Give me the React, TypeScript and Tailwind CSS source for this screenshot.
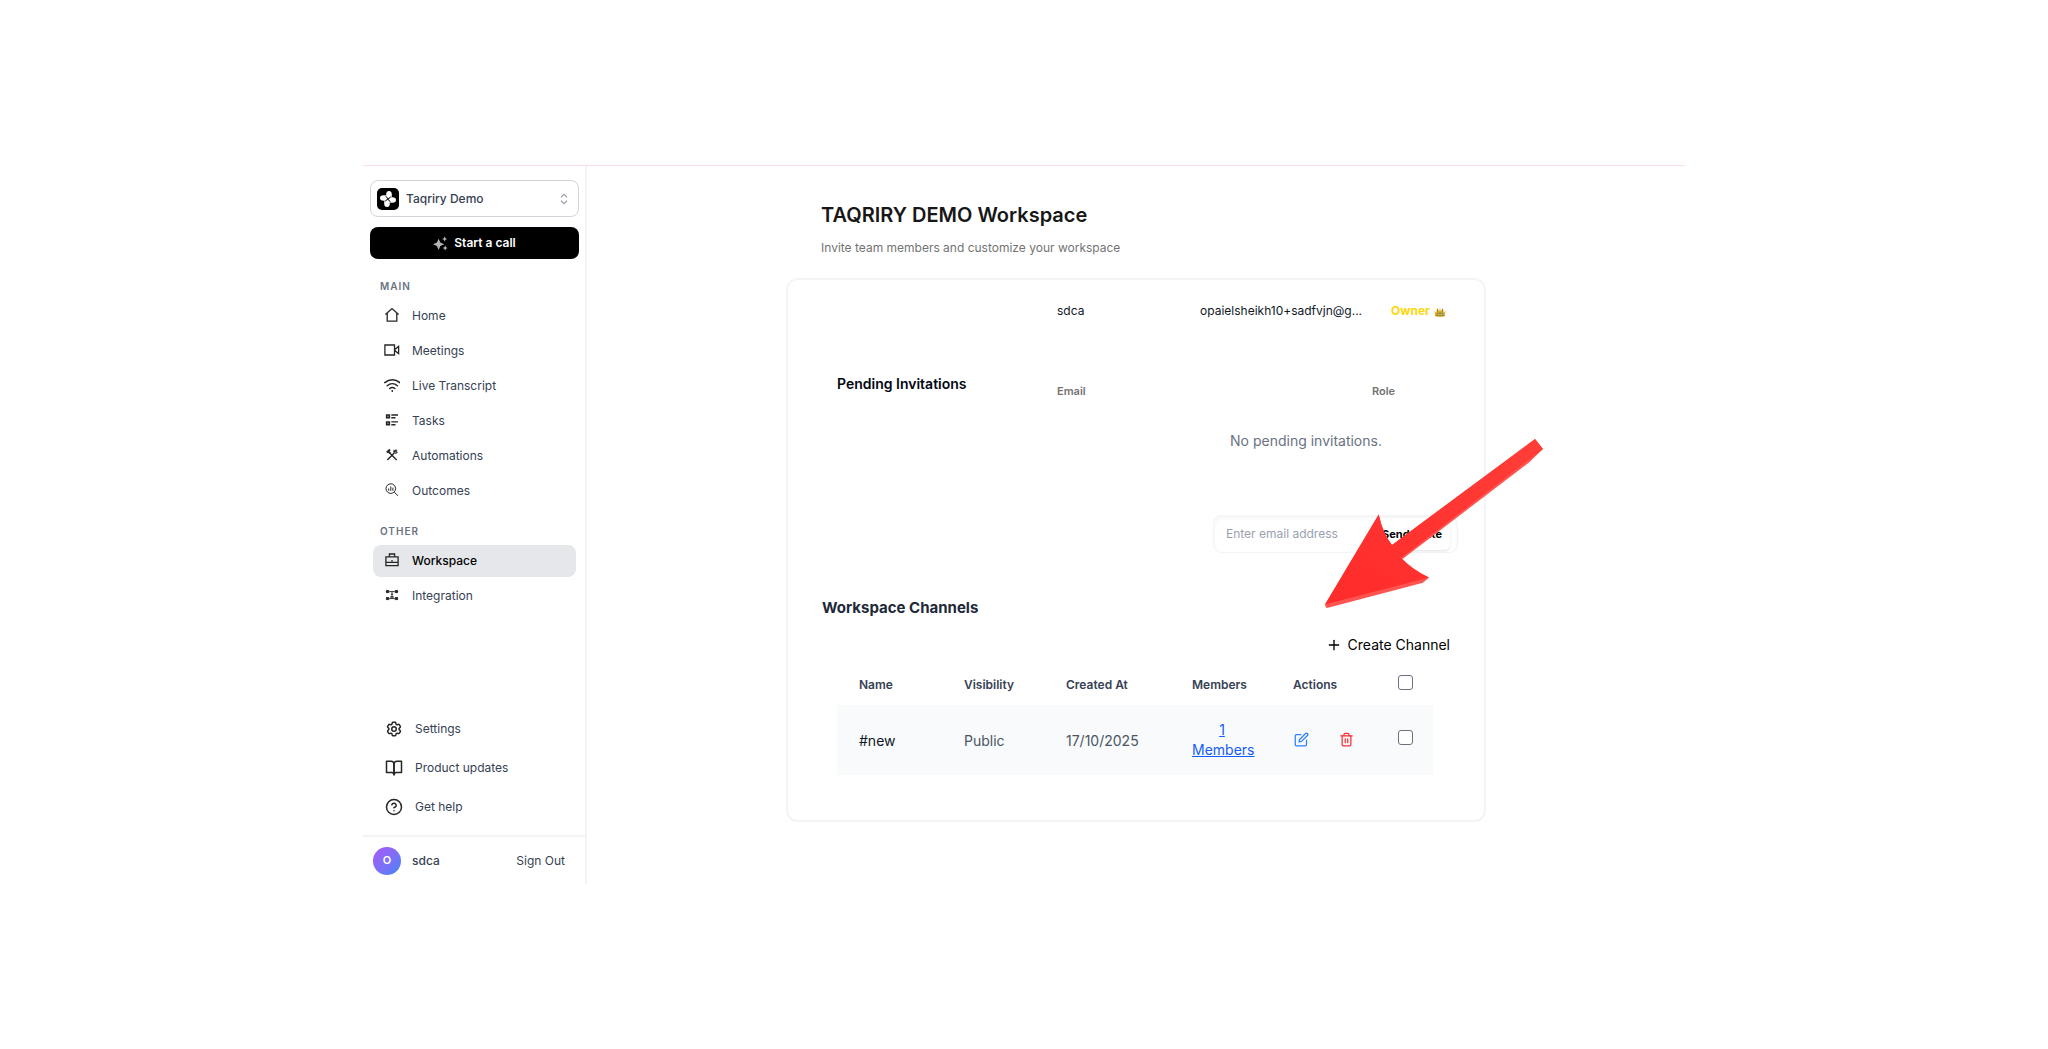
import { useState } from "react";
import type { ReactNode } from "react";
import { FiBookOpen, FiEdit, FiHelpCircle, FiPlus, FiTrash2 } from "react-icons/fi";
import { HiOutlineCog6Tooth } from "react-icons/hi2";

const Icon = ({ children, className = "h-4 w-4" }: { children: ReactNode; className?: string }) => (
    <svg viewBox="0 0 16 16" fill="none" stroke="currentColor" strokeWidth="1.3" className={className} aria-hidden="true">
        {children}
    </svg>
);

const HomeIcon = () => (
    <Icon>
        <path d="M1.4 7.6 8 1.6l6.6 6M3.2 6.2v8h9.6v-8" />
    </Icon>
);

const MeetingsIcon = () => (
    <Icon>
        <path d="M.9 3h9.6v10H.9zM11 7.2l3.6-2.8v7.2L11 8.8z" />
    </Icon>
);

const LiveIcon = () => (
    <Icon>
        <path d="M.8 5.6c4.4-3.8 10.8-3.8 15 0M3.2 8.7c3-2.6 7.2-2.6 10.2 0M5.7 11.5c1.6-1.3 3.6-1.3 5.2 0" strokeWidth="1.5" strokeLinecap="round" />
        <circle cx="8.3" cy="14" r="0.9" fill="currentColor" stroke="none" />
    </Icon>
);

const TasksIcon = () => (
    <Icon>
        <path d="M2.7 3h2.6v2.6H2.7zM2.7 10h2.6v2.6H2.7z" strokeWidth="1.7" />
        <path d="M7.3 3H14M7.3 5.8h4.2M7.3 9.9H14M7.3 12.7h4.2" strokeWidth="1.4" />
    </Icon>
);

const AutomationsIcon = () => (
    <Icon>
        <path d="M5.5 5.8 12.6 13M10.2 5.9 3.4 13" strokeWidth="1.4" />
        <path d="M2.8 5.4 6 2.6M3.6 3.7l2.5 2.5" strokeWidth="2" />
        <path d="M10.2 2.8c-.6 1.3-.3 2.3.5 2.9.9.6 1.9.5 2.7-.5M12.3 2.5l-1.2 1.8 2.1-.4" strokeWidth="1.2" />
    </Icon>
);

const OutcomesIcon = () => (
    <Icon>
        <circle cx="6.8" cy="6.6" r="4.8" strokeWidth="1" />
        <path d="M10.3 10.2 14 13.8M4.7 6.5v2.3M6.8 4.5v4.3M8.9 5.7v3.1" strokeWidth="1" />
    </Icon>
);

const WorkspaceIcon = () => (
    <Icon>
        <path d="M1.9 4.9h12.2v8.8H1.9zM5.4 4.7V2h5.2v2.7M2 10.3h12M8 8v1.6" />
    </Icon>
);

const IntegrationIcon = () => (
    <Icon>
        <path d="M2.4 3.6h2.4v2H2.4zM11.2 3.6h2.4v2h-2.4zM2.4 10.6h2.4v2H2.4zM11.2 10.6h2.4v2h-2.4z" fill="currentColor" strokeWidth="1" />
        <path d="M5.3 4.6h5.4M5.3 11.6h1.4M9.3 11.6h1.4M8 4.6v2.6M6.8 7.2h2.4M8 7.2v4.4M6.8 9.6h2.4v2H6.8z" strokeWidth="0.9" />
    </Icon>
);

const mainItems = [
    { label: "Home", icon: <HomeIcon /> },
    { label: "Meetings", icon: <MeetingsIcon /> },
    { label: "Live Transcript", icon: <LiveIcon /> },
    { label: "Tasks", icon: <TasksIcon /> },
    { label: "Automations", icon: <AutomationsIcon /> },
    { label: "Outcomes", icon: <OutcomesIcon /> },
];

const otherItems = [
    { label: "Workspace", icon: <WorkspaceIcon />, active: true },
    { label: "Integration", icon: <IntegrationIcon /> },
];

const footerItems = [
    { label: "Settings", icon: <HiOutlineCog6Tooth strokeWidth={2} className="h-[18px] w-[18px]" /> },
    { label: "Product updates", icon: <FiBookOpen className="h-[18px] w-[18px]" /> },
    { label: "Get help", icon: <FiHelpCircle className="h-[18px] w-[18px]" /> },
];

const channels = [{ name: "#new", visibility: "Public", createdAt: "17/10/2025", members: 1 }];

type Item = { label: string; icon: ReactNode; active?: boolean };

function NavGroup({ title, items }: { title: string; items: Item[] }) {
    return (
        <div className="mb-[14px]">
            <h2 className="px-[10px] pb-1 text-[10px] leading-5 font-semibold tracking-widest text-gray-500">{title}</h2>
            <ul className="flex flex-col gap-[3px] px-[3px]">
                {items.map((item) => (
                    <li key={item.label}>
                        <a
                            href="#"
                            className={`flex h-8 items-center gap-3 rounded-lg px-[11px] text-[12px] ${item.active ? "bg-gray-200 font-medium text-black" : "text-gray-700"}`}
                        >
                            <span className="pb-[2px] text-neutral-800">{item.icon}</span>
                            {item.label}
                        </a>
                    </li>
                ))}
            </ul>
        </div>
    );
}

function Sidebar() {
    return (
        <aside className="flex w-56 shrink-0 flex-col border-r-2 border-gray-100">
            <div className="flex flex-col gap-[10px] pt-[14px] pr-[6px] pb-[17px] pl-[7px]">
                <button className="flex h-[37px] items-center rounded-lg border border-gray-300 px-[6px] text-[12px] font-medium text-gray-700">
                    <svg viewBox="0 0 22 22" className="mr-[7px] h-[22px] w-[22px]" aria-hidden="true">
                        <rect width="22" height="22" rx="5" fill="#000" />
                        <g fill="#fff">
                            <ellipse cx="12" cy="6.5" rx="2.8" ry="3.5" />
                            <ellipse cx="10" cy="15.5" rx="2.8" ry="3.5" />
                            <ellipse cx="6.5" cy="10" rx="3.5" ry="2.8" />
                            <ellipse cx="15.5" cy="12" rx="3.5" ry="2.8" />
                            <rect x="7.5" y="7.5" width="7" height="7" />
                        </g>
                        <path d="M9 8.3c.2 1.2.8 1.7 2 1.8M13.8 9c-1.2.2-1.7.8-1.8 2M13 13.8c-.2-1.2-.8-1.700-2-1.800M8.200 13c1.200-.2 1.700-.8 1.800-2" stroke="#000" strokeWidth="1" fill="none" />
                        <circle cx="11" cy="11" r="0.9" fill="#000" />
                    </svg>
                    Taqriry Demo
                    <svg viewBox="0 0 10 12" className="mr-[3px] ml-auto h-3 w-[10px]" fill="none" stroke="#9ca3af" strokeWidth="1.2" aria-hidden="true">
                        <path d="M2 4.2 5 1.4l3 2.8M2 7.8l3 2.8 3-2.8" />
                    </svg>
                </button>
                <button className="flex h-8 items-center justify-center gap-[6px] rounded-lg bg-black text-[12px] font-semibold text-white">
                    <svg viewBox="0 0 16 16" className="h-[15px] w-[15px]" fill="#b5b5b5" aria-hidden="true">
                        <path d="M6 2.8 7.8 7 12 8.8 7.8 10.6 6 14.8 4.2 10.6 0 8.8 4.2 7zM12.4.6l.9 1.7 1.7.9-1.7.9-.9 1.7-.9-1.7-1.7-.9 1.7-.9zM13 10.2l.9 1.7 1.7.9-1.7.9-.9 1.7-.9-1.7-1.7-.9 1.7-.9z" />
                    </svg>
                    Start a call
                </button>
            </div>
            <nav className="pr-[6px] pl-[7px]">
                <NavGroup title="MAIN" items={mainItems} />
                <NavGroup title="OTHER" items={otherItems} />
            </nav>
            <div className="mt-auto flex flex-col gap-[7px] pb-3 pl-[22px]">
                {footerItems.map((item) => (
                    <a key={item.label} href="#" className="flex h-8 items-center gap-3 text-[12px] text-gray-700">
                        <span className="text-neutral-800">{item.icon}</span>
                        {item.label}
                    </a>
                ))}
            </div>
            <div className="flex h-[49px] items-center border-t-2 border-gray-100 pr-[20px] pl-[10px] text-[12px] text-gray-700">
                <span className="mr-[11px] flex h-7 w-7 items-center justify-center rounded-full bg-linear-to-br from-[#a855f7] to-[#3b82f6] text-[11px] font-semibold text-white">
                    O
                </span>
                <span className="font-medium">sdca</span>
                <button className="ml-auto">Sign Out</button>
            </div>
        </aside>
    );
}

function Crown() {
    return (
        <svg viewBox="0 0 12 11" className="h-[11px] w-3" role="img" aria-label="crown">
            <path d="M1.4 10.2.2 4.6l2 1.8L3.2 2l2 3.2L6 1l.8 4.2L8.8 2l1 4.4 2-1.8-1.2 5.6c-2.8.8-6.4.8-9.2 0z" fill="#e3b53a" />
            <path d="M1.4 9.2c3 .8 6.2.8 9.2 0M3.2 3l1 4M8.8 3l-1 4" stroke="#946c1c" strokeWidth="0.8" fill="none" />
            <circle cx="6" cy="7.6" r="1" fill="#2a9d6a" />
            <circle cx="3.3" cy="7.7" r="0.7" fill="#c8443a" />
            <circle cx="8.7" cy="7.7" r="0.7" fill="#3a74c8" />
        </svg>
    );
}

// Red pointer that sits over the invite form
function Pointer() {
    return (
        <svg viewBox="0 0 220 170" className="pointer-events-none absolute -top-[78px] -right-[88px] h-[170px] w-[220px]" aria-hidden="true">
            <path d="M0 166.5 1 169.8 3 169.8 98 144.8 104 139.5 Q88 132 77.5 121L204 24.5 218 11 210 1 67 107Q58 96 53.7 76.5z" fill="#ff5450" />
            <path d="M0 166.5 104 139.5Q86 131 76 120L218 11 210 1 67 107Q58 96 53.7 76.5z" fill="url(#pointer-fill)" />
            <defs>
                <linearGradient id="pointer-fill" x1="0" y1="1" x2="1" y2="0">
                    <stop offset="0" stopColor="#ff2b2b" />
                    <stop offset="1" stopColor="#ff3e38" />
                </linearGradient>
            </defs>
        </svg>
    );
}

function ChannelsTable() {
    const [selected, setSelected] = useState<string[]>([]);
    const allSelected = selected.length === channels.length;

    const toggle = (name: string) =>
        setSelected((prev) => (prev.includes(name) ? prev.filter((n) => n !== name) : [...prev, name]));

    const checkbox = "mx-auto block h-[15px] w-[15px] appearance-none rounded-[3px] border border-gray-500 bg-white checked:bg-blue-500";

    return (
        <table className="w-full table-fixed text-left text-[14px] text-gray-600">
            <colgroup>
                <col className="w-[105px]" />
                <col className="w-[102px]" />
                <col className="w-[126px]" />
                <col className="w-[101px]" />
                <col />
                <col className="w-14" />
            </colgroup>
            <thead>
                <tr className="h-10 text-[12px] text-gray-700">
                    <th className="pl-[22px] font-semibold">Name</th>
                    <th className="pl-[22px] font-semibold">Visibility</th>
                    <th className="pl-[22px] font-semibold">Created At</th>
                    <th className="pl-[22px] font-semibold">Members</th>
                    <th className="pl-[22px] font-semibold">Actions</th>
                    <th className="pb-[5px]">
                        <input
                            type="checkbox"
                            aria-label="Select all channels"
                            className={checkbox}
                            checked={allSelected}
                            onChange={() => setSelected(allSelected ? [] : channels.map((c) => c.name))}
                        />
                    </th>
                </tr>
            </thead>
            <tbody>
                {channels.map((channel) => (
                    <tr key={channel.name} className="h-[70px] bg-gray-50">
                        <td className="pl-[22px] text-gray-900">{channel.name}</td>
                        <td className="pl-[22px]">{channel.visibility}</td>
                        <td className="pl-[22px]">{channel.createdAt}</td>
                        <td className="pl-[22px]">
                            <a href="#" className="block w-[60px] text-center leading-5 text-blue-600 underline">
                                {channel.members} Members
                            </a>
                        </td>
                        <td className="pb-[2px] pl-[23px]">
                            <div className="flex gap-[30px]">
                                <button aria-label="Edit channel" className="text-blue-500">
                                    <FiEdit className="h-[15px] w-[15px]" />
                                </button>
                                <button aria-label="Delete channel" className="text-red-500">
                                    <FiTrash2 className="h-[15px] w-[15px]" />
                                </button>
                            </div>
                        </td>
                        <td className="pb-[5px]">
                            <input
                                type="checkbox"
                                aria-label={`Select ${channel.name}`}
                                className={checkbox}
                                checked={selected.includes(channel.name)}
                                onChange={() => toggle(channel.name)}
                            />
                        </td>
                    </tr>
                ))}
            </tbody>
        </table>
    );
}

export default function App() {
    const [email, setEmail] = useState("");

    return (
        <div className="flex min-h-screen items-center bg-white font-[Inter,'Liberation_Sans',sans-serif]">
            <div className="mx-auto flex min-h-[719px] w-full max-w-[1322px] border-t border-[#fbdfe4]">
                <Sidebar />
                <main className="flex-1 pt-[34px]">
                    <div className="mx-auto w-full max-w-[700px]">
                        <header className="pl-[35px]">
                            <h1 className="text-[20px] leading-[30px] font-semibold text-neutral-900">TAQRIRY DEMO Workspace</h1>
                            <p className="mt-2 text-[12px] leading-5 text-neutral-500">Invite team members and customize your workspace</p>
                        </header>

                        <section className="mt-5 rounded-xl border-2 border-gray-100 px-[34px] pt-[21px] pb-[45px]">
                            <div className="ml-[235px] flex h-5 items-center text-[12px] text-gray-900">
                                <span className="w-[143px]">sdca</span>
                                <span className="w-[191px]">opaielsheikh10+sadfvjn@g...</span>
                                <span className="flex items-center gap-1 font-bold whitespace-nowrap text-[#ffd60a]">
                                    Owner <Crown />
                                </span>
                            </div>

                            <div className="mt-[53px] flex pl-[15px]">
                                <h2 className="w-[220px] text-[14px] leading-5 font-semibold text-gray-950">Pending Invitations</h2>
                                <div className="flex-1 pt-[7px]">
                                    <div className="flex text-[11px] leading-5 font-semibold text-neutral-500">
                                        <span className="w-[315px]">Email</span>
                                        <span>Role</span>
                                    </div>
                                    <p className="mt-[30px] pl-[105px] text-center text-[14px] leading-5 text-gray-500">No pending invitations.</p>
                                </div>
                            </div>

                            <form className="relative mt-16 -mr-2 ml-auto flex h-[38px] w-[245px] items-center rounded-lg border border-gray-100 px-[7px] shadow-inner" onSubmit={(e) => e.preventDefault()}>
                                <input
                                    type="email"
                                    aria-label="Email address"
                                    placeholder="Enter email address"
                                    value={email}
                                    onChange={(e) => setEmail(e.target.value)}
                                    className="min-w-0 flex-1 pl-[5px] text-[12px] text-gray-900 outline-none placeholder:text-gray-400"
                                />
                                <button className="h-8 rounded-md bg-white px-2 text-[11px] font-bold whitespace-nowrap text-black shadow-sm">Send Invite</button>
                                <Pointer />
                            </form>

                            <h2 className="mt-[45px] text-[15px] leading-5 font-bold text-gray-800">Workspace Channels</h2>
                            <div className="mt-[17px] flex justify-end">
                                <button className="flex items-center gap-[6px] text-[14px] leading-5 text-black">
                                    <FiPlus className="h-4 w-4" />
                                    Create Channel
                                </button>
                            </div>
                            <div className="mt-[10px] pr-[17px] pl-[15px]">
                                <ChannelsTable />
                            </div>
                        </section>
                    </div>
                </main>
            </div>
        </div>
    );
}
